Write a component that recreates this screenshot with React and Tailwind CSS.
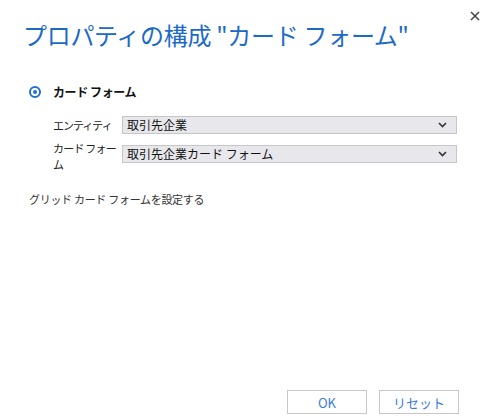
import React from "react";

const jp = { fontFamily: '"Noto Sans CJK JP", "Noto Sans", sans-serif' };

function Chevron() {
  return (
    <svg width="9" height="6" viewBox="0 0 9 6" className="absolute right-[9px] top-1/2 -translate-y-1/2">
      <path d="M1 1 L4.5 4.5 L8 1" fill="none" stroke="#333" strokeWidth="1.6" />
    </svg>
  );
}

function Select({ value }) {
  return (
    <div className="relative shrink-0 w-[335px] h-[18px] bg-[#e8e8ec] border border-[#c6c6c6] flex items-center pl-[4px] text-[12px] leading-none text-[#111]">
      {value}
      <Chevron />
    </div>
  );
}

export default function App() {
  return (
    <div className="relative w-[489px] h-[419px] bg-white overflow-hidden" style={jp}>
      <button className="absolute left-[469px] top-[10px] w-[12px] h-[12px] flex items-center justify-center">
        <svg width="10" height="10" viewBox="0 0 10 10">
          <path d="M1 1 L9 9 M9 1 L1 9" stroke="#444" strokeWidth="1.5" />
        </svg>
      </button>

      <div className="pt-[18px] pl-[23px]">
        <h1 className="text-[24px] leading-[34px] text-[#1b6ac9] font-normal tracking-[-0.3px]">
          プロパティの構成 "カード フォーム"
        </h1>
      </div>

      <div className="mt-[30px] pl-[29px] flex items-center h-[20px]">
        <span className="w-[12px] h-[12px] rounded-full border-[2px] border-[#1f6fd6] flex items-center justify-center">
          <span className="w-[4px] h-[4px] rounded-full bg-[#1f6fd6]" />
        </span>
        <span className="ml-[12px] text-[12px] font-bold text-[#111] leading-none tracking-[-0.4px]">カード フォーム</span>
      </div>

      <div className="mt-[14px] pl-[53px] flex flex-col gap-[11px]">
        <div className="flex items-center">
          <div className="w-[69px] shrink-0 text-[11px] text-[#222] leading-[16px] tracking-[-1px] whitespace-nowrap">エンティティ</div>
          <Select value="取引先企業" />
        </div>
        <div className="flex items-start">
          <div className="w-[69px] shrink-0 -mt-[5px] text-[11px] text-[#222] leading-[16px] tracking-[-0.8px] whitespace-nowrap">
            カード フォー
            <br />ム
          </div>
          <Select value="取引先企業カード フォーム" />
        </div>
      </div>

      <div className="mt-[19px] pl-[29px] text-[11px] text-[#333] leading-[16px] tracking-[-0.3px]">
        グリッド カード フォームを設定する
      </div>

      <div className="absolute left-[287px] top-[390px] flex gap-[12px]">
        <button className="w-[80px] h-[24px] border border-[#c8c8c8] bg-white text-[13px] text-[#3b7be0] leading-none">OK</button>
        <button className="w-[80px] h-[24px] border border-[#c8c8c8] bg-white text-[13px] text-[#3b7be0] leading-none">リセット</button>
      </div>
    </div>
  );
}
